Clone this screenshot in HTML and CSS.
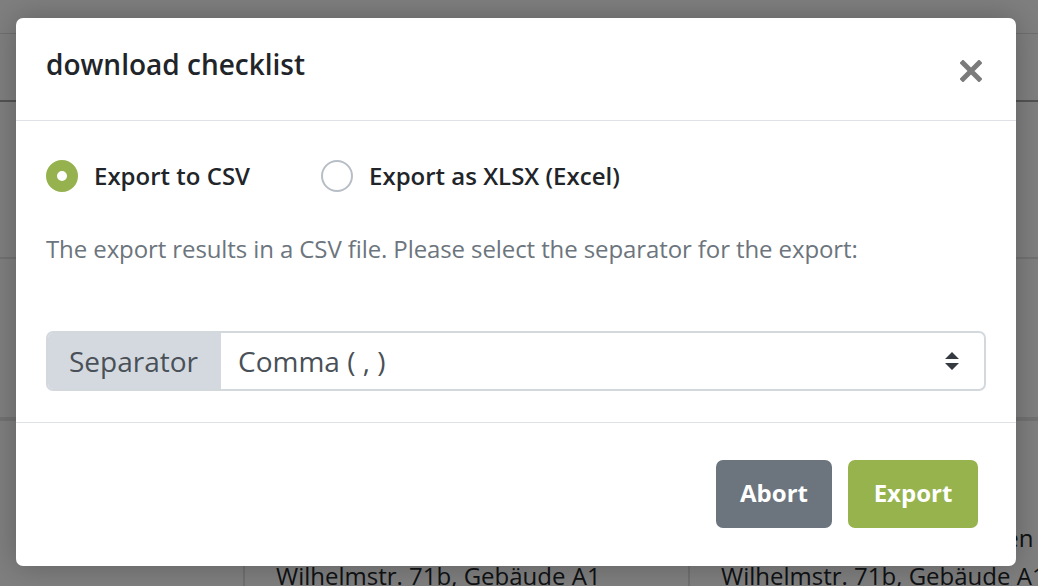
FILE: index.html
```html
<!DOCTYPE html>
<html lang="en">
<head>
<meta charset="utf-8">
<title>download checklist</title>
<link rel="stylesheet" href="styles.css">
</head>
<body>
<div class="page">
  <div class="topbar"></div>
  <div class="toolbar"></div>
  <div class="band"></div>
  <div class="band band-2"></div>
  <div class="table-row">
    <div class="cell cell-first"></div>
    <div class="cell"><span class="line">&nbsp;</span><span class="line">Wilhelmstr. 71b, Gebäude A1</span></div>
    <div class="cell"><span class="line">Verwaltungsgebäude Süden</span><span class="line">Wilhelmstr. 71b, Gebäude A1</span></div>
  </div>
</div>

<div class="backdrop">
  <div class="modal">
    <div class="modal-header">
      <h5 class="modal-title">download checklist</h5>
      <button class="close" type="button" aria-label="Close">
        <svg width="22" height="22" viewBox="0 0 22 22"><path d="M3 3 L19 19 M19 3 L3 19" stroke="#7b7b7b" stroke-width="5" stroke-linecap="square" fill="none"/></svg>
      </button>
    </div>
    <div class="modal-body">
      <div class="radios">
        <label class="radio"><span class="radio-dot checked"></span><span class="radio-label">Export to CSV</span></label>
        <label class="radio"><span class="radio-dot"></span><span class="radio-label">Export as XLSX (Excel)</span></label>
      </div>
      <p class="hint">The export results in a CSV file. Please select the separator for the export:</p>
      <div class="input-group">
        <span class="input-label">Separator</span>
        <div class="select">
          <span class="select-value">Comma ( , )</span>
          <svg class="select-arrows" width="16" height="20" viewBox="0 0 16 20"><path d="M8 1 L15 8 L1 8 Z M1 12 L15 12 L8 19 Z" fill="#343a40"/></svg>
        </div>
      </div>
    </div>
    <div class="modal-footer">
      <button class="btn btn-secondary" type="button">Abort</button>
      <button class="btn btn-primary" type="button">Export</button>
    </div>
  </div>
</div>
</body>
</html>
```

FILE: styles.css
```css
* { box-sizing: border-box; }
html, body { margin: 0; padding: 0; }
body {
  width: 1038px;
  height: 586px;
  overflow: hidden;
  font-family: "Open Sans", "Liberation Sans", sans-serif;
  background: #ffffff;
  position: relative;
}

/* page behind the modal */
.page { width: 1038px; height: 586px; background: #fff; overflow: hidden; }
.topbar { height: 34px; border-bottom: 1px solid #dedede; }
.toolbar { height: 68px; border-bottom: 2px solid #a6a6a6; }
.band { height: 157px; border-bottom: 2px solid #e4e4e4; }
.band-2 { height: 160px; }
.table-row {
  display: grid;
  grid-template-columns: 243px 445px 1fr;
  height: 170px;
  border-top: 2px solid #e4e4e4;
}
.cell {
  border-left: 2px solid #e0e0e0;
  padding: 98px 0 0 31px;
  font-size: 24px;
  line-height: 38px;
  color: #212529;
  white-space: nowrap;
  overflow: hidden;
}
.cell-first { border-left: none; }
.line { display: block; }

/* modal */
.backdrop {
  position: absolute;
  inset: 0;
  background: rgba(0, 0, 0, 0.5);
  padding: 18px 0 0 16px;
}
.modal {
  width: 1000px;
  height: 548px;
  background: #fff;
  border-radius: 7px;
  box-shadow: 0 0 30px rgba(0, 0, 0, 0.25);
  display: flex;
  flex-direction: column;
}
.modal-header {
  display: flex;
  justify-content: space-between;
  align-items: flex-start;
  padding: 29px 34px 38px 30px;
  border-bottom: 1px solid #dee2e6;
}
.modal-title {
  margin: 0;
  font-size: 28px;
  line-height: 34px;
  font-weight: 600;
  color: #212529;
}
.close {
  border: 0;
  background: none;
  padding: 0;
  margin-top: 13px;
  width: 22px;
  height: 22px;
  display: block;
}
.close svg { display: block; }

.modal-body {
  padding: 37px 30px 31px 30px;
  border-bottom: 1px solid #dee2e6;
}
.radios {
  display: flex;
  gap: 71px;
  height: 36px;
  align-items: center;
}
.radio {
  display: flex;
  align-items: center;
  gap: 16px;
}
.radio-dot {
  width: 32px;
  height: 32px;
  border-radius: 50%;
  border: 2px solid #b8bec6;
  background: #fff;
}
.radio-dot.checked {
  border: 11px solid #95b24e;
  background: #fff;
}
.radio-label {
  font-size: 24px;
  font-weight: 600;
  color: #212529;
  line-height: 36px;
}
.hint {
  margin: 38px 0 0;
  font-size: 24px;
  line-height: 33px;
  color: #6c757d;
  letter-spacing: -0.1px;
}
.input-group {
  margin-top: 66px;
  display: flex;
  height: 60px;
  border: 2px solid #d3d8dd;
  border-radius: 7px;
  overflow: hidden;
}
.input-label {
  width: 173px;
  background: #d4d9e0;
  color: #495057;
  font-size: 28px;
  line-height: 56px;
  padding-left: 21px;
}
.select {
  flex: 1;
  display: flex;
  align-items: center;
  justify-content: space-between;
  padding: 0 24px 0 17px;
  font-size: 28px;
  color: #495057;
}
.select-value { line-height: 56px; }
.select-arrows { display: block; }

.modal-footer {
  display: flex;
  justify-content: flex-end;
  gap: 16px;
  padding: 37px 38px 0 0;
}
.btn {
  height: 68px;
  border: 0;
  border-radius: 7px;
  color: #fff;
  font-family: "Open Sans", "Liberation Sans", sans-serif;
  font-size: 24px;
  font-weight: 700;
  padding: 0 0 3px;
}
.btn-secondary { background: #6c757d; width: 116px; }
.btn-primary { background: #96b34e; width: 130px; }
```
